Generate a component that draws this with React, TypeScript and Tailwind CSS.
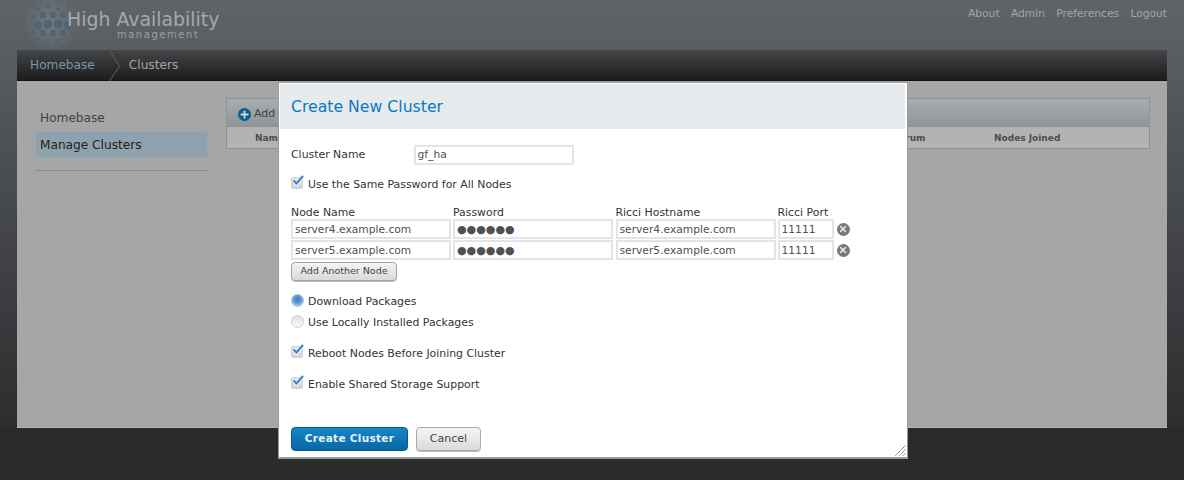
import { Plus, X } from "lucide-react";

const nodes = ["server4.example.com", "server5.example.com"];
const hosts = ["server4.example.com", "server5.example.com"];

function Logo() {
  const dots: [number, number, number][] = [
    [10, 9, 2], [20, 6, 2], [30, 9, 2], [40, 6, 2],
    [5, 17, 3], [15, 15, 3.5], [25, 15, 3.5], [35, 15, 3.5], [45, 17, 3],
    [10, 25, 4], [20, 24, 4.5], [30, 24, 4.5], [40, 25, 4],
    [5, 33, 2.5], [15, 33, 3.5], [25, 33, 3.5], [35, 33, 3.5], [45, 33, 2.5],
    [10, 40, 2], [20, 41, 2.5], [30, 41, 2.5], [40, 40, 2],
  ];
  return (
    <svg width="60" height="50" viewBox="0 0 60 50" className="shrink-0">
      <defs>
        <radialGradient id="glow">
          <stop offset="0%" stopColor="#6f8c9f" stopOpacity="0.7" />
          <stop offset="100%" stopColor="#6f8c9f" stopOpacity="0" />
        </radialGradient>
      </defs>
      <circle cx="26" cy="24" r="28" fill="url(#glow)" />
      {dots.map(([x, y, r]) => (
        <circle key={`${x}-${y}`} cx={x + 3} cy={y} r={r} fill="#59636b" />
      ))}
    </svg>
  );
}

function Check() {
  return (
    <span className="relative w-[12px] h-[12px] mb-[5px] shrink-0 rounded-[2px] border border-[#cfd2d5] bg-gradient-to-b from-[#e4e6e8] to-[#d3d6d9]">
      <svg width="15" height="14" viewBox="0 0 15 14" className="absolute left-[-1px] top-[-4px]">
        <path d="M2.5 6.5 L5.5 9.5 L12 2" fill="none" stroke="#ffffff" strokeWidth="3.6" />
        <path d="M2.5 6.5 L5.5 9.5 L12 2" fill="none" stroke="#3f80c4" strokeWidth="2.2" />
      </svg>
    </span>
  );
}

function Radio({ on }: { on?: boolean }) {
  return (
    <span
      className={
        on
          ? "w-[13px] h-[13px] mb-[3px] shrink-0 rounded-full border border-[#a9bdd4] bg-[radial-gradient(circle_at_50%_40%,#3a7fc8_0%,#5f9bdb_45%,#d5e2ef_90%)]"
          : "w-[13px] h-[13px] mb-[3px] shrink-0 rounded-full border border-[#cdcfd1] bg-gradient-to-b from-[#dedfe0] to-[#fbfbfb]"
      }
    />
  );
}

function Field({ value, className }: { value: string; className: string }) {
  return (
    <input
      readOnly
      value={value}
      className={`h-[20px] border-2 border-[#e1e5e8] bg-white pl-[2px] text-[10.7px] text-[#505050] outline-none ${className}`}
    />
  );
}

export default function App() {
  return (
    <div className="relative w-[1184px] h-[480px] overflow-hidden bg-[#2a2b2d] font-['DejaVu_Sans',sans-serif]">
      <div className="h-[428px] bg-gradient-to-b from-[#606468] to-[#2c2d2f]">
        {/* Top bar */}
        <div className="h-[50px] flex justify-between pl-[25px] pr-[17px]">
          <div className="flex">
            <Logo />
            <div className="relative -left-[18px] pt-[9px] flex flex-col items-end text-[#a6a9ab]">
              <span className="text-[18.9px] leading-[21px]">High Availability</span>
              <span className="text-[10px] leading-[10px] tracking-[1.55px] pr-[20px] text-[#9d9fa1]">management</span>
            </div>
          </div>
          <div className="flex gap-[11.3px] pt-[7px] text-[10.7px] leading-[14px] text-[#a3a5a7]">
            <span>About</span>
            <span>Admin</span>
            <span>Preferences</span>
            <span>Logout</span>
          </div>
        </div>

        {/* Breadcrumb */}
        <div className="mx-[17px] h-[31px] flex items-center pt-[1px] bg-gradient-to-b from-[#454648] to-[#1d1d1e] border-b border-[#111] text-[12.15px]">
          <span className="pl-[13px] text-[#7e95a3]">Homebase</span>
          <svg width="14" height="30" viewBox="0 0 14 30" className="ml-[14px] shrink-0">
            <path d="M0.5 0 L10.5 15 L0.5 30" fill="none" stroke="#5f6163" />
          </svg>
          <span className="ml-[6px] text-[#a3a5a7]">Clusters</span>
        </div>

        {/* Content */}
        <div className="mx-[17px] h-[347px] flex bg-[#a5a6a8] pt-[17px] border-b border-[#b4b4b5]">
          <div className="ml-[18px] w-[173px] shrink-0">
            <div className="h-[33px] pl-[5px] pt-[12px] text-[12.15px] leading-[16px] text-[#414243]">Homebase</div>
            <div className="h-[27px] pl-[4px] pt-[1px] flex items-center bg-[#8fa1ad] border border-[#98a8b2] text-[12.15px] text-[#1e1f20]">
              Manage Clusters
            </div>
            <div className="mt-[12px] border-t border-[#8a8b8d]" />
          </div>
          <div className="ml-[18px] w-[924px] h-[51px] border border-[#8f9193] bg-[#b3b3b4]">
            <div className="h-[28px] pl-[11px] pt-[2px] flex items-center gap-[3px] bg-gradient-to-b from-[#a8adb0] to-[#8f9498] text-[11px] text-[#3e3f40]">
              <span className="w-[13px] h-[13px] rounded-full bg-[#0a5f92] flex items-center justify-center">
                <Plus size={11} strokeWidth={4} color="#c9d6de" />
              </span>
              Add
            </div>
            <div className="h-[21px] relative pt-[1px] text-[9px] font-bold leading-[21px] text-[#4c4d4e]">
              <span className="absolute left-[28px]">Name</span>
              <span className="absolute left-[658px]">Quorum</span>
              <span className="absolute left-[767px]">Nodes Joined</span>
            </div>
          </div>
        </div>
      </div>

      {/* Modal */}
      <div className="absolute left-[278px] top-[82px] w-[630px] h-[377px] bg-white border border-b-2 border-[#97999b] p-[1px] pb-0 text-[10.9px] text-[#333]">
        <div className="h-[45px] mr-[1px] flex items-center pl-[11px] bg-[#e7ebee] text-[15.7px] text-[#0b78bc]">
          Create New Cluster
        </div>

        <div className="px-[11px]">
          <div className="mt-[16px] h-[19px] flex items-center">
            <span className="w-[122.5px] pt-[1px]">Cluster Name</span>
            <Field value="gf_ha" className="w-[160px]" />
          </div>

          <div className="mt-[13px] h-[16px] flex items-center gap-[5px]">
            <Check />
            Use the Same Password for All Nodes
          </div>

          <div className="mt-[14px] grid grid-cols-[162px_162.5px_162px_58px_auto] gap-y-[1px] items-center">
            {["Node Name", "Password", "Ricci Hostname", "Ricci Port"].map((h) => (
              <span key={h} className="h-[11px] leading-[11px]">{h}</span>
            ))}
            <span />
            {nodes.map((n, i) => (
              <div key={n} className="contents">
                <Field value={n} className="w-[160px]" />
                <Field value="●●●●●●" className="w-[160px] text-[11px] text-[#333]" />
                <Field value={hosts[i]} className="w-[160px]" />
                <Field value="11111" className="w-[56px]" />
                <span className="ml-[1px] w-[13px] h-[13px] rounded-full bg-[#77797a] flex items-center justify-center">
                  <X size={10} strokeWidth={3.5} color="#eee" />
                </span>
              </div>
            ))}
          </div>

          <button className="block mt-[2px] h-[19px] w-[106px] rounded-[4px] border border-[#a0a2a4] bg-gradient-to-b from-[#f4f4f4] to-[#d8dadb] text-[9.5px] font-medium text-[#444] shadow-[0_1px_0_#bbb]">
            Add Another Node
          </button>

          <div className="mt-[14px] h-[14px] flex items-center gap-[4px]">
            <Radio on />
            Download Packages
          </div>
          <div className="mt-[7px] h-[14px] flex items-center gap-[4px]">
            <Radio />
            Use Locally Installed Packages
          </div>
          <div className="mt-[17px] h-[14px] flex items-center gap-[5px]">
            <Check />
            Reboot Nodes Before Joining Cluster
          </div>
          <div className="mt-[17px] h-[14px] flex items-center gap-[5px]">
            <Check />
            Enable Shared Storage Support
          </div>

          <div className="mt-[35px] flex gap-[8px]">
            <button className="w-[117px] h-[24px] rounded-[4px] border border-[#0a5a8f] bg-gradient-to-b from-[#1386c8] to-[#0a66a4] text-[10.5px] font-bold tracking-[0.3px] text-[#e8f1f7]">
              Create Cluster
            </button>
            <button className="w-[65px] h-[24px] rounded-[4px] border border-[#a8aaac] bg-gradient-to-b from-[#f5f5f5] to-[#d9dbdc] text-[11px] text-[#444] shadow-[0_1px_0_#bbb]">
              Cancel
            </button>
          </div>
        </div>

        <svg width="11" height="11" viewBox="0 0 11 11" className="absolute right-[1px] bottom-[1px]">
          <path d="M0.5 10.5 L10.5 0.5 M4.5 10.5 L10.5 4.5 M8 10.5 L10.5 8" stroke="#555" strokeDasharray="1.2 0.6" />
        </svg>
      </div>
    </div>
  );
}
